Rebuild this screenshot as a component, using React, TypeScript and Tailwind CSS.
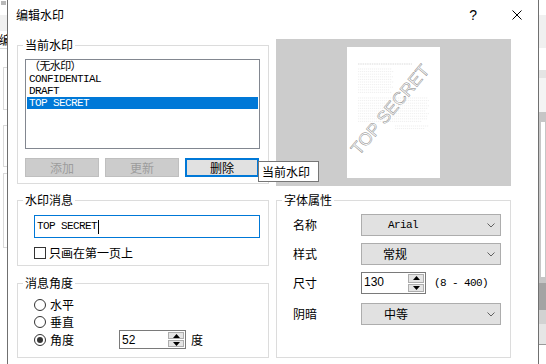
import React from "react";

const mono =
  "font-['Liberation_Mono','Noto_Sans_CJK_SC',monospace] text-[11px] tracking-[-0.6px]";

type GroupProps = { title: string; className?: string; children: React.ReactNode };

const Group = ({ title, className = "", children }: GroupProps) => (
  <fieldset className={`border border-[#dcdcdc] ${className}`}>
    <legend className="ml-[5px] px-[2px] text-[12px] leading-[14px]">{title}</legend>
    {children}
  </fieldset>
);

const Chevron = () => (
  <svg width="8" height="5" viewBox="0 0 8 5">
    <polyline points="0.5,0.5 4,4 7.5,0.5" fill="none" stroke="#606060" strokeWidth="1" />
  </svg>
);

const Combo = ({ value, pad, font = "" }: { value: string; pad: string; font?: string }) => (
  <div className="flex h-[22px] w-[140px] items-center justify-between border border-[#adadad] bg-[#e1e1e1] pr-[5px]">
    <span className={`${pad} ${font}`}>{value}</span>
    <Chevron />
  </div>
);

const Spin = ({ value, className }: { value: string; className: string }) => (
  <div className={`flex border border-[#7a7a7a] bg-white ${className}`}>
    <span className="flex-1 pl-[2px] pt-[2px] font-['Liberation_Sans',sans-serif] text-[12px] leading-[14px]">
      {value}
    </span>
    <div className="my-[1px] mr-[1px] flex w-[16px] flex-col gap-[1px]">
      <div className="flex flex-1 items-center justify-center border border-[#adadad] bg-[#e5e5e5]">
        <svg width="7" height="4" viewBox="0 0 7 4">
          <polygon points="3.5,0 7,4 0,4" fill="#000" />
        </svg>
      </div>
      <div className="flex flex-1 items-center justify-center border border-[#adadad] bg-[#e5e5e5]">
        <svg width="7" height="4" viewBox="0 0 7 4">
          <polygon points="0,0 7,0 3.5,4" fill="#000" />
        </svg>
      </div>
    </div>
  </div>
);

const Radio = ({ label, checked = false, className = "" }: { label: string; checked?: boolean; className?: string }) => (
  <div className={`flex items-center gap-[4px] ${className}`}>
    <span className="flex h-[12px] w-[12px] items-center justify-center rounded-full border border-[#333333] bg-white">
      {checked && <span className="h-[6px] w-[6px] rounded-full bg-[#333333]" />}
    </span>
    {label}
  </div>
);

const para1 = [34, 36, 33, 35, 34, 36, 33, 35, 32, 34];
const para2 = [70, 71, 69, 71, 70, 68, 71, 70, 69, 64];

// tiny greyed-out document text behind the watermark
const Page = () => (
  <div className="h-[131px] w-[93px] bg-white">
    <svg width="93" height="131" viewBox="0 0 93 131">
      <line x1="11" y1="17" x2="65" y2="17" stroke="#d2d2d2" strokeWidth="0.8" strokeDasharray="1.5 0.8" />
      {para1.map((w, i) => (
        <line key={"a" + i} x1="11" y1={22 + i * 2.6} x2={11 + w} y2={22 + i * 2.6} stroke="#e4e4e4" strokeWidth="0.6" strokeDasharray="1.2 0.8" />
      ))}
      {para2.map((w, i) => (
        <line key={"b" + i} x1="11" y1={51 + i * 2.6} x2={11 + w} y2={51 + i * 2.6} stroke="#e4e4e4" strokeWidth="0.6" strokeDasharray="1.2 0.8" />
      ))}
      <line x1="48" y1="79" x2="82" y2="79" stroke="#e4e4e4" strokeWidth="0.6" strokeDasharray="1.2 0.8" />
      <line x1="48" y1="81.6" x2="78" y2="81.6" stroke="#e4e4e4" strokeWidth="0.6" strokeDasharray="1.2 0.8" />
      <text
        x="0"
        y="0"
        transform="translate(12 109) rotate(-50)"
        fontFamily="Liberation Sans, Arial, sans-serif"
        fontSize="17.5"
        fill="none"
        stroke="#8a8a8a"
        strokeWidth="0.5"
      >
        TOP SECRET
      </text>
    </svg>
  </div>
);

const LeftStrip = () => (
  <div className="flex w-[7px] shrink-0 flex-col overflow-hidden bg-white">
    <div className="h-[15px]">
      <div className="ml-[1px] mt-[1px] h-[4px] w-[5px] bg-[#b8b8b8]" />
    </div>
    <div className="h-[16px] bg-[#f0f0f0]" />
    <div className="-ml-[1px] h-[17px] text-[12px] leading-[17px]">编</div>
    <div className="h-px bg-[#dadada]" />
    <div className="ml-[3px] mt-[18px] h-[43px] border-y border-l border-[#dadada]" />
    <div className="ml-[3px] mt-[15px] h-[42px] border-y border-l border-[#dadada]" />
    <div className="ml-[3px] mt-[6px] h-[75px] border-y border-l border-[#dadada]" />
  </div>
);

const RightStrip = () => (
  <div className="flex w-[7px] shrink-0 flex-col overflow-hidden bg-white">
    <div className="h-[15px]" />
    <div className="h-[33px] bg-[#f0f0f0]" />
    <div className="h-[22px]" />
    <div className="h-[8px] bg-[#e4e4e4]" />
    <div className="h-[34px] bg-[#f4f4f4]" />
    <div className="flex h-[171px] bg-[#c6c6c6] pt-[10px]">
      <div className="ml-[2px] h-[155px] w-[4px] bg-white" />
    </div>
    <div className="h-[27px] bg-[#a4a4a4]" />
    <div className="h-[14px] bg-[#d2d2d2]" />
    <div className="h-[20px] bg-[#e6e6e6]" />
    <div className="h-px bg-[#9a9a9a]" />
  </div>
);

export default function App() {
  return (
    <div className="flex h-[364px] w-[546px] overflow-hidden bg-white font-['Noto_Sans_CJK_SC',sans-serif] text-[12px] text-black">
      <LeftStrip />
      <div className="relative flex w-[532px] shrink-0 flex-col border-x border-[#707070] bg-white">
        <div className="flex h-[30px] shrink-0 items-center pl-[8px]">
          <span className="text-[12px]">编辑水印</span>
          <span className="ml-auto font-['Liberation_Sans',sans-serif] text-[14px]">?</span>
          <svg className="ml-[35px] mr-[16px]" width="10" height="10" viewBox="0 0 10 10">
            <path d="M0.5 0.5 L9.5 9.5 M9.5 0.5 L0.5 9.5" stroke="#000" strokeWidth="1" />
          </svg>
        </div>

        <div className="flex gap-[7px] pl-[9px] pt-[8px]">
          <div className="flex w-[252px] flex-col">
            <Group title="当前水印" className="h-[146px]">
              <div className="ml-[7px] mt-[7px] h-[90px] w-[235px] border border-[#828790] bg-white px-[1px] pt-[1px]">
                {["（无水印）", "CONFIDENTIAL", "DRAFT", "TOP SECRET"].map((t, i) => (
                  <div
                    key={t}
                    className={`h-[12px] pl-[2px] leading-[12px] ${mono} ${
                      i === 3 ? "bg-[#0078d7] text-white" : "text-black"
                    }`}
                  >
                    {t}
                  </div>
                ))}
              </div>
              <div className="ml-[7px] mt-[9px] flex gap-[6px]">
                <button disabled className="h-[19px] w-[74px] border border-[#bfbfbf] bg-[#cccccc] text-[12px] leading-[17px] text-[#9c9c9c]">
                  添加
                </button>
                <button disabled className="h-[19px] w-[74px] border border-[#bfbfbf] bg-[#cccccc] text-[12px] leading-[17px] text-[#9c9c9c]">
                  更新
                </button>
                <button className="h-[19px] w-[74px] border-2 border-[#0078d7] bg-[#e1e1e1] text-[12px] leading-[15px]">
                  删除
                </button>
              </div>
            </Group>

            <Group title="水印消息" className="mt-[9px] h-[73px]">
              <div className="ml-[16px] mt-[8px] flex h-[23px] w-[226px] items-center border border-[#0078d7] pl-[2px]">
                <span className={mono}>TOP SECRET</span>
                <span className="ml-[1px] h-[14px] w-px bg-black" />
              </div>
              <div className="ml-[16px] mt-[9px] flex items-center gap-[3px] leading-[12px]">
                <span className="h-[12px] w-[12px] border border-[#333333] bg-white" />
                只画在第一页上
              </div>
            </Group>

            <Group title="消息角度" className="mt-[10px] h-[82px]">
              <div className="ml-[16px] mt-[6px] flex flex-col">
                <Radio label="水平" className="h-[17px]" />
                <Radio label="垂直" className="h-[17px]" />
                <div className="flex h-[19px] items-center">
                  <Radio label="角度" checked className="w-[85px]" />
                  <Spin value="52" className="h-[19px] w-[67px]" />
                  <span className="ml-[5px]">度</span>
                </div>
              </div>
            </Group>
          </div>

          <div className="flex w-[235px] flex-col">
            <div className="mt-[1px] flex h-[147px] items-center justify-center bg-[#cccccc]">
              <Page />
            </div>
            <Group title="字体属性" className="mt-[7px] h-[165px]">
              <div className="ml-[16px] flex flex-col">
                <div className="mt-[7px] flex h-[22px] items-center">
                  <span className="w-[68px]">名称</span>
                  <Combo value="Arial" pad="pl-[26px]" font={mono} />
                </div>
                <div className="mt-[7px] flex h-[22px] items-center">
                  <span className="w-[68px]">样式</span>
                  <Combo value="常规" pad="pl-[21px]" />
                </div>
                <div className="mt-[7px] flex h-[22px] items-center">
                  <span className="w-[68px]">尺寸</span>
                  <Spin value="130" className="h-[22px] w-[65px]" />
                  <span className={`ml-[8px] ${mono}`}>(8 - 400)</span>
                </div>
                <div className="mt-[9px] flex h-[22px] items-center">
                  <span className="w-[68px]">阴暗</span>
                  <Combo value="中等" pad="pl-[22px]" />
                </div>
              </div>
            </Group>
          </div>
        </div>

        <div className="absolute left-[250px] top-[161px] flex h-[21px] w-[61px] items-center border border-[#767676] bg-white pl-[3px] text-[12px]">
          当前水印
        </div>
      </div>
      <RightStrip />
    </div>
  );
}
